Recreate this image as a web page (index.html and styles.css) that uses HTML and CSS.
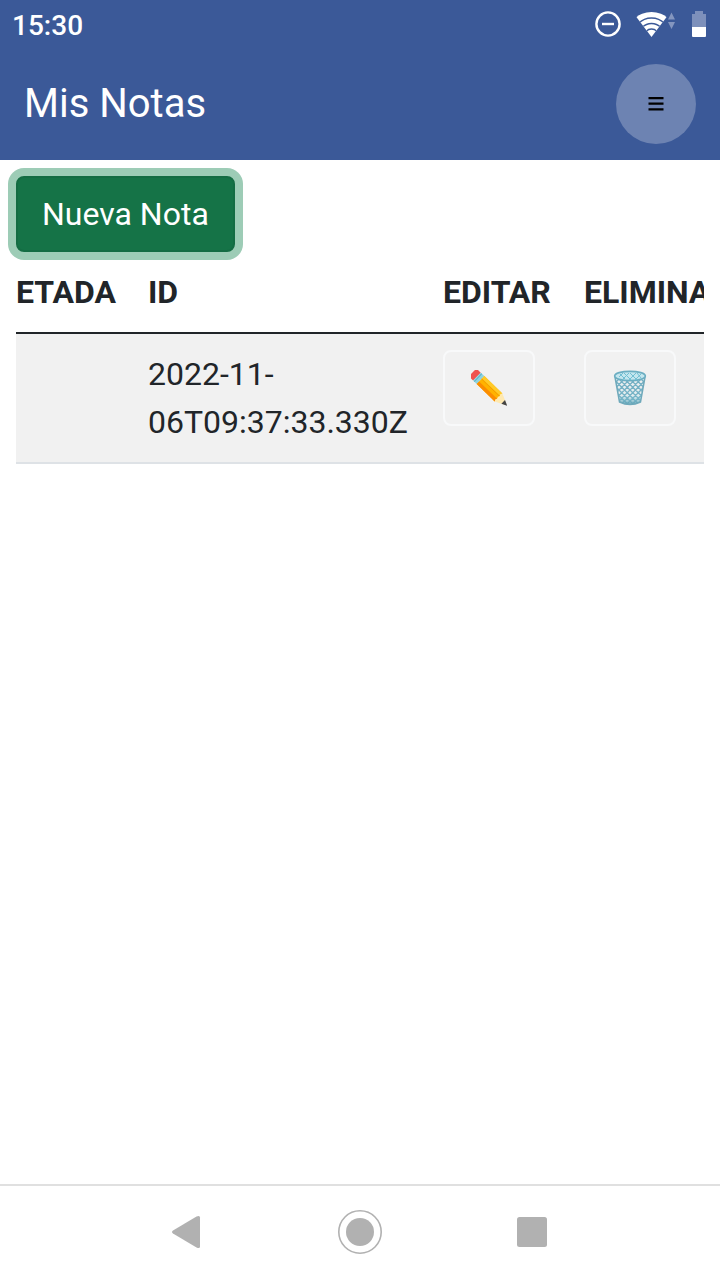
FILE: index.html
```html
<!DOCTYPE html>
<html lang="es">
<head>
<meta charset="utf-8">
<meta name="viewport" content="width=device-width, initial-scale=1">
<title>Mis Notas</title>
<link rel="stylesheet" href="styles.css">
</head>
<body>
<div class="screen">
  <header class="top">
    <div class="status">
      <time class="clock">15:30</time>
      <svg class="status-icons" viewBox="0 0 112 28" aria-hidden="true">
        <circle cx="13" cy="14" r="11.6" fill="none" stroke="#fff" stroke-width="2.4"/>
        <path d="M7 14h12" stroke="#fff" stroke-width="2.4"/>
        <clipPath id="fan"><path d="M56.500 27 41 6.500V0h31v6.500z"/></clipPath>
        <g clip-path="url(#fan)">
          <circle cx="56.500" cy="26.500" r="24.500" fill="#fff"/>
          <g fill="none" stroke="#3b5998" stroke-width="1.300">
            <circle cx="56.500" cy="26.500" r="18.500"/>
            <circle cx="56.500" cy="26.500" r="13"/>
            <circle cx="56.500" cy="26.500" r="7.500"/>
          </g>
        </g>
        <path d="M76.500 2.500l3.500 7h-7zM76.500 19 73 12h7z" fill="#8496bf"/>
        <path d="M97 4h3V1h8v3h3v13H97z" fill="#7d90bb"/>
        <path d="M97 17h14v9q0 1-1 1H98q-1 0-1-1z" fill="#fff"/>
      </svg>
    </div>
    <div class="toolbar">
      <h1 class="title">Mis Notas</h1>
      <button class="menu" type="button" aria-label="Menú">
        <svg class="menu-icon" viewBox="0 0 16 16" aria-hidden="true"><path d="M.5 2.200h15M.5 7.700h15M.5 13.400h15" stroke="#000" stroke-width="2.200"/></svg>
      </button>
    </div>
  </header>
  <main class="content">
    <button class="new-note" type="button">Nueva Nota</button>
    <div class="table-wrap">
      <table class="notes">
        <thead>
          <tr><th class="col-tag">ETADA</th><th class="col-id">ID</th><th class="col-edit">EDITAR</th><th>ELIMINAR</th></tr>
        </thead>
        <tbody>
          <tr>
            <td class="col-tag"></td>
            <td>2022-11-<wbr>06T09:37:33.330Z</td>
            <td>
              <button class="action" type="button" aria-label="Editar">
                <svg class="action-icon" viewBox="0 0 36 36" aria-hidden="true">
                  <g transform="translate(4.500 5.200) rotate(44)">
                    <path d="M2-5.500h-3.500Q-4-5.500-4-3v6q0 2.500 2.500 2.500H2z" fill="#ef5350"/>
                    <path d="M2-5.500h5v11H2z" fill="#8fd3e0"/>
                    <path d="M3.500-5.500v11" stroke="#62b4c8" stroke-width="1"/>
                    <path d="M7-5.500h25v11H7z" fill="#ffb300"/>
                    <path d="M7-5.500h25v3.300H7z" fill="#ffca28"/>
                    <path d="M7 2h25v3.500H7z" fill="#fb8c00"/>
                    <path d="M7-1.500h25" stroke="#f29a00" stroke-width=".8"/>
                    <path d="M32-5.500 42-1v2L32 5.500l-1-2 1-1.700-1-1.800 1-1.800-1-1.700z" fill="#ffe9b0"/>
                    <path d="M38.500-2.600 44 0l-5.500 2.600z" fill="#444"/>
                  </g>
                </svg>
              </button>
            </td>
            <td>
              <button class="action" type="button" aria-label="Eliminar">
                <svg class="action-icon" viewBox="0 0 36 36" aria-hidden="true">
                  <defs>
                    <linearGradient id="bin" x1="0" y1="0" x2="0" y2="1"><stop offset="0" stop-color="#8cc3d3" stop-opacity="0"/><stop offset=".65" stop-color="#8ccfdf" stop-opacity=".15"/><stop offset="1" stop-color="#4f94a9"/></linearGradient>
                    <clipPath id="basket"><path d="M3 7h30l-4.500 25q-10.500 5-21 0z"/></clipPath>
                  </defs>
                  <g clip-path="url(#basket)">
                    <path d="M-19 5 11 35M-13.500 5l30 30M-8 5l30 30M-2.500 5l30 30M3 5l30 30M8.500 5l30 30M14 5l30 30M19.500 5l30 30M25 5l30 30M55 5 25 35M49.500 5l-30 30M44 5 14 35M38.500 5l-30 30M33 5 3 35M27.500 5l-30 30M22 5-8 35M16.500 5l-30 30M11 5l-30 30" stroke="#72aec2" stroke-width="1.300"/>
                    <path d="M0 5h36v31H0z" fill="url(#bin)"/>
                  </g>
                  <path d="M3 7 7.500 32q10.500 5 21 0L33 7" fill="none" stroke="#6fa9bb" stroke-width="1.500"/>
                  <ellipse cx="18" cy="6" rx="15.300" ry="4.700" fill="#c4e6ee" stroke="#6caec2" stroke-width="1.700"/>
                  <path d="M7 7 11 3M11 9l6-6M17 10l7-7M23 10l6-6M29 8 25 3M25 10l-7-7M19 10l-7-7M13 9 8 4" stroke="#72bfd3" stroke-width="1"/>
                </svg>
              </button>
            </td>
          </tr>
        </tbody>
      </table>
    </div>
  </main>
  <nav class="navbar" aria-label="Sistema">
    <button class="nav-btn" type="button" aria-label="Atrás"><svg class="nav-icon" viewBox="0 0 44 44"><path d="M7 20.500 30.500 6.500q3.500-1.500 3.500 1v29q0 2.500-3.500 1L7 23.500q-2-1.500 0-3z" fill="#b1b1b1"/></svg></button>
    <button class="nav-btn" type="button" aria-label="Inicio"><svg class="nav-icon" viewBox="0 0 44 44"><circle cx="22" cy="22" r="21.200" fill="none" stroke="#b1b1b1" stroke-width="1.600"/><circle cx="22" cy="22" r="14" fill="#b1b1b1"/></svg></button>
    <button class="nav-btn" type="button" aria-label="Recientes"><svg class="nav-icon" viewBox="0 0 44 44"><rect x="7" y="7" width="30" height="30" rx="2.500" fill="#b1b1b1"/></svg></button>
  </nav>
</div>
</body>
</html>
```
FILE: styles.css
```css
* {
  box-sizing: border-box;
}

body {
  margin: 0;
  background: #fff;
  color: #212529;
  font: 32px/48px Roboto, sans-serif;
}

button {
  margin: 0;
  font: inherit;
  cursor: pointer;
}

svg {
  display: block;
}

.screen {
  display: flex;
  flex-direction: column;
  min-height: 100vh;
}

.top {
  background: #3b5998;
  color: #fff;
}

.status {
  display: flex;
  align-items: center;
  justify-content: space-between;
  height: 48px;
  padding: 0 12px;
}

.clock {
  padding-top: 4px;
  font-size: 28px;
  font-weight: 500;
}

.status-icons {
  width: 112px;
  height: 28px;
  margin-right: 1px;
}

.toolbar {
  display: flex;
  align-items: center;
  justify-content: space-between;
  height: 112px;
  padding: 0 24px;
}

.title {
  margin: 0;
  font-size: 40px;
  font-weight: 400;
}

.menu {
  display: grid;
  place-items: center;
  width: 80px;
  height: 80px;
  padding: 0;
  border: 0;
  border-radius: 50%;
  background: #6d83b2;
}

.menu-icon {
  width: 16px;
  height: 16px;
}

.content {
  flex: 1;
  padding: 16px;
}

.new-note {
  display: block;
  padding: 12px 24px;
  border: 2px solid #146c43;
  border-radius: 8px;
  background: #157347;
  box-shadow: 0 0 0 8px #9dccb6;
  color: #fff;
}

.table-wrap {
  overflow: hidden;
}

.notes {
  width: 100%;
  border-collapse: separate;
  border-spacing: 0;
}

.notes th,
.notes td {
  padding: 16px;
  text-align: left;
  vertical-align: top;
}

.notes .col-tag {
  padding-left: 0;
}

.notes .col-id {
  min-width: 295px;
}

.notes .col-edit {
  min-width: 141px;
}

.notes th {
  border-bottom: 2px solid #212529;
  font-weight: 700;
}

.notes td {
  border-bottom: 2px solid #dee2e6;
  background: #f1f1f1;
}

.action {
  display: grid;
  place-items: center;
  width: 92px;
  height: 76px;
  padding: 0;
  border: 2px solid #f8f9fa;
  border-radius: 8px;
  background: transparent;
}

.action-icon {
  width: 36px;
  height: 36px;
}

.navbar {
  display: flex;
  justify-content: center;
  gap: 128px;
  padding: 24px 24px 26px;
  border-top: 2px solid #e0e0e0;
}

.nav-btn {
  padding: 0;
  border: 0;
  background: transparent;
}

.nav-icon {
  width: 44px;
  height: 44px;
}
```
